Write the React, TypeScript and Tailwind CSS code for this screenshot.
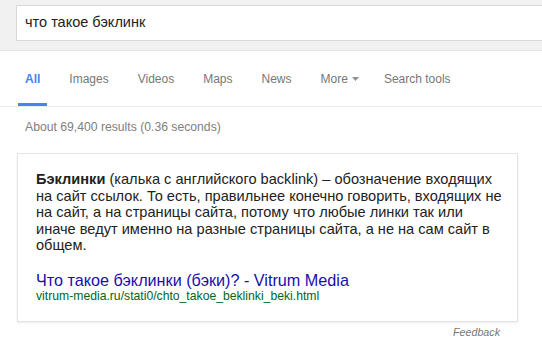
import React from "react";

const tabs = ["Images", "Videos", "Maps", "News"];

export default function App() {
  return (
    <div className="w-[542px] h-[348px] overflow-hidden bg-white font-['Liberation_Sans',Arial,sans-serif]">
      {/* Header with search box */}
      <div className="h-[51px] bg-[#f1f1f1] border-b border-[#e5e5e5] pt-[5px] pl-[16px]">
        <div className="h-[36px] w-[600px] bg-white border border-[#d9d9d9] flex items-center pl-[8px] text-[14.5px] text-[#222]">
          что такое бэклинк
        </div>
      </div>

      {/* Tabs */}
      <div className="h-[56px] border-b border-[#ebebeb] flex items-stretch pl-[18px] text-[12px] text-[#777]">
        <div className="h-full px-[7px] flex items-center border-b-[3px] border-[#4285f4] pt-[3px] font-bold text-[#4285f4]">
          All
        </div>
        <div className="flex items-center gap-[29px] ml-[22px]">
          {tabs.map((t) => (
            <span key={t}>{t}</span>
          ))}
          <span className="flex items-center">
            More
            <svg width="7" height="4" viewBox="0 0 7 4" className="ml-[4px] mt-[1px]">
              <path d="M0 0 L7 0 L3.5 4 Z" fill="#909090" />
            </svg>
          </span>
          <span className="-ml-[4px]">Search tools</span>
        </div>
      </div>

      {/* Result stats */}
      <div className="mt-[13px] pl-[25px] text-[12.2px] leading-[14px] text-[#808080]">
        About 69,400 results (0.36 seconds)
      </div>

      {/* Answer card */}
      <div className="mt-[19px] ml-[17px] w-[501px] bg-white border border-[#e4e4e4] shadow-[0_1px_2px_rgba(0,0,0,0.08)] pl-[18px] pr-[10px] pt-[17px] pb-[18px]">
        <div className="text-[14.6px] leading-[16.6px] text-[#222] whitespace-nowrap">
          <b>Бэклинки</b> (калька с английского backlink) – обозначение входящих
          <br />
          на сайт ссылок. То есть, правильнее конечно говорить, входящих не
          <br />
          на сайт, а на страницы сайта, потому что любые линки так или
          <br />
          иначе ведут именно на разные страницы сайта, а не на сам сайт в
          <br />
          общем.
        </div>
        <div className="mt-[17px] text-[16.2px] leading-[18px] text-[#1a0dab]">
          Что такое бэклинки (бэки)? - Vitrum Media
        </div>
        <div className="text-[12.2px] leading-[14px] text-[#006621]">
          vitrum-media.ru/stati0/chto_takoe_beklinki_beki.html
        </div>
      </div>

      {/* Feedback */}
      <div className="w-[518px] flex justify-end pr-[18px] mt-[4px]">
        <span className="text-[10.7px] leading-[12px] italic text-[#777]">Feedback</span>
      </div>
    </div>
  );
}
